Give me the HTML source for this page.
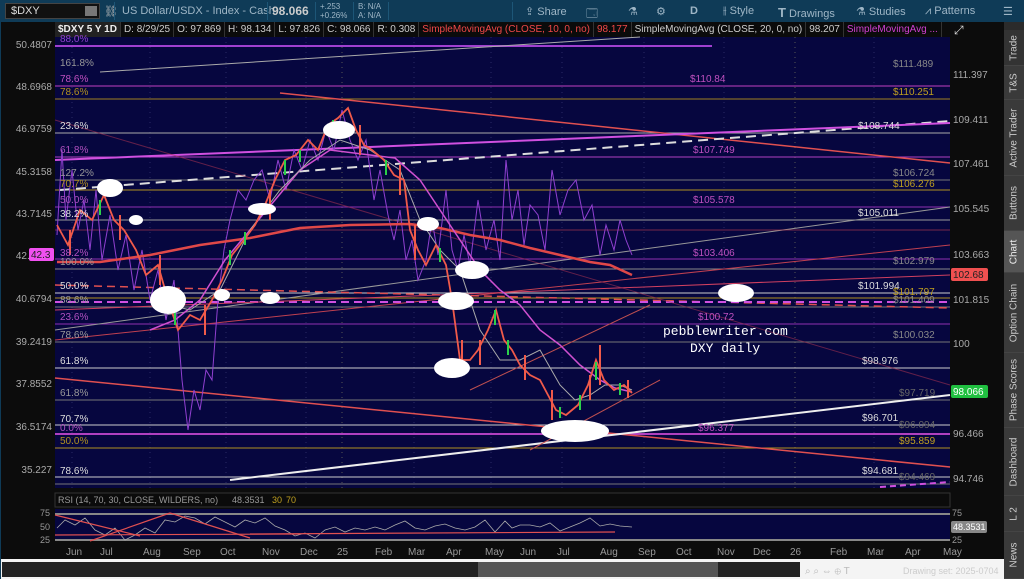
<!DOCTYPE html>
<html><head><meta charset="utf-8"><style>
*{margin:0;padding:0;box-sizing:border-box}
body{width:1024px;height:579px;overflow:hidden;background:#0c0c0c;font-family:"Liberation Sans",sans-serif;position:relative}
.tb{position:absolute;left:0;top:0;width:1024px;height:22px;background:#0f3b57;color:#9fb6c6;font-size:11px}
.tb span{position:absolute;top:5px;white-space:nowrap}
.sep{position:absolute;top:2px;width:1px;height:18px;background:#1d5677}
.ir{position:absolute;left:55px;top:22px;height:15px;background:#0b0b0b;font-size:10px;color:#ccc;white-space:nowrap}
.ir span{display:inline-block;padding:0 3px;border-right:1px solid #333;line-height:15px}
.side{position:absolute;left:1004px;top:22px;width:20px;height:557px;background:#2b2b2b}
.tab{position:absolute;left:0;width:20px;border-bottom:1px solid #444;background:#3a3a3a;color:#ccc;font-size:10px}
.tab div{position:absolute;left:50%;top:50%;transform:translate(-50%,-50%) rotate(-90deg);white-space:nowrap}
</style></head><body>
<div class="tb">
<div style="position:absolute;left:5px;top:3px;width:95px;height:16px;background:#111;border:1px solid #444;color:#ddd;font-size:11px;padding:1px 5px">$DXY<div style="position:absolute;right:2px;top:2px;width:12px;height:10px;background:#777"></div></div>
<span style="left:104px;color:#bbb">⛓</span>
<div class="sep" style="left:114px"></div>
<span style="left:122px;font-size:11px;top:5px">US Dollar/USDX - Index - Cash</span>
<div class="sep" style="left:267px"></div>
<span style="left:272px;font-size:12px;top:4px;font-weight:bold;color:#ccc">98.066</span>
<div class="sep" style="left:315px"></div>
<span style="left:320px;font-size:8px;top:2px;line-height:9px">+.253<br>+0.26%</span>
<div class="sep" style="left:353px"></div>
<span style="left:358px;font-size:8px;top:2px;line-height:9px">B: N/A<br>A: N/A</span>
<div class="sep" style="left:388px"></div>
<div class="sep" style="left:512px"></div>
<span style="left:525px">⇪ Share</span>
<span style="left:586px">🗔</span><span style="left:628px">⚗</span><span style="left:656px">⚙</span><span style="left:690px;font-weight:bold">D</span>
<span style="left:723px">⫲ Style</span><span style="left:778px"><b style="font-size:13px">T</b> Drawings</span>
<span style="left:856px">⚗ Studies</span><span style="left:925px">⩘ Patterns</span><span style="left:1003px">☰</span>
</div>
<div class="ir"><span style="font-weight:bold;color:#eee;background:#222">$DXY 5 Y 1D</span><span>D: 8/29/25</span><span>O: 97.869</span><span>H: 98.134</span><span>L: 97.826</span><span>C: 98.066</span><span>R: 0.308</span><span style="color:#f04848">SimpleMovingAvg (CLOSE, 10, 0, no)</span><span style="color:#f04848">98.177</span><span>SimpleMovingAvg (CLOSE, 20, 0, no)</span><span>98.207</span><span style="color:#d040d0">SimpleMovingAvg ...</span></div>
<svg style="position:absolute;left:0;top:0" width="1004" height="579" font-family="Liberation Sans" font-size="10">
<rect x="55" y="37" width="895" height="451" fill="#06063f"/>
<g stroke="#2a2a66" stroke-dasharray="1,4"><line x1="72" y1="37" x2="72" y2="488"/><line x1="150" y1="37" x2="150" y2="488"/><line x1="226" y1="37" x2="226" y2="488"/><line x1="306" y1="37" x2="306" y2="488"/><line x1="342" y1="37" x2="342" y2="488" stroke="#555"/><line x1="414" y1="37" x2="414" y2="488"/><line x1="491" y1="37" x2="491" y2="488"/><line x1="562" y1="37" x2="562" y2="488"/><line x1="644" y1="37" x2="644" y2="488"/><line x1="724" y1="37" x2="724" y2="488"/><line x1="795" y1="37" x2="795" y2="488" stroke="#555"/><line x1="874" y1="37" x2="874" y2="488"/></g>
<g stroke-width="1">
<line x1="55" y1="46" x2="712" y2="46" stroke="#a040d0" stroke-width="2"/>
<line x1="55" y1="86" x2="950" y2="86" stroke="#c040c0"/>
<line x1="55" y1="99" x2="950" y2="99" stroke="#a08020"/>
<line x1="55" y1="133" x2="950" y2="133" stroke="#aaa"/>
<line x1="55" y1="157" x2="950" y2="157" stroke="#b040c0"/>
<line x1="55" y1="180" x2="950" y2="180" stroke="#777"/>
<line x1="55" y1="190" x2="950" y2="190" stroke="#b09020"/>
<line x1="55" y1="207" x2="950" y2="207" stroke="#9030b0"/>
<line x1="55" y1="220" x2="950" y2="220" stroke="#999"/>
<line x1="55" y1="259" x2="950" y2="259" stroke="#9030b0"/>
<line x1="55" y1="269" x2="950" y2="269" stroke="#888"/>
<line x1="55" y1="293" x2="950" y2="293" stroke="#ccc"/>
<line x1="55" y1="298" x2="950" y2="298" stroke="#b09020"/>
<line x1="55" y1="307" x2="950" y2="307" stroke="#777"/>
<line x1="55" y1="324" x2="950" y2="324" stroke="#9030b0"/>
<line x1="55" y1="342" x2="950" y2="342" stroke="#777"/>
<line x1="55" y1="368" x2="950" y2="368" stroke="#ccc"/>
<line x1="55" y1="400" x2="950" y2="400" stroke="#777"/>
<line x1="55" y1="425" x2="950" y2="425" stroke="#ccc"/>
<line x1="55" y1="434" x2="950" y2="434" stroke="#b040c0" stroke-width="2"/>
<line x1="55" y1="448" x2="950" y2="448" stroke="#b09020"/>
<line x1="55" y1="477" x2="950" y2="477" stroke="#ccc"/>
<line x1="55" y1="484" x2="950" y2="484" stroke="#777"/>
</g>
<g fill="none">
<line x1="100" y1="72" x2="640" y2="37" stroke="#aaa"/>
<line x1="280" y1="93" x2="950" y2="163" stroke="#e05050" stroke-width="1.5"/>
<line x1="60" y1="190" x2="950" y2="121" stroke="#ddd" stroke-width="2" stroke-dasharray="10,6"/>
<line x1="55" y1="160" x2="950" y2="123" stroke="#d050e0" stroke-width="2"/>
<line x1="55" y1="330" x2="950" y2="207" stroke="#999"/>
<line x1="55" y1="340" x2="950" y2="245" stroke="#c04050"/>
<line x1="55" y1="230" x2="950" y2="230" stroke="#c04050" opacity=".6"/>
<line x1="55" y1="285" x2="950" y2="308" stroke="#e05050" stroke-width="1.5" stroke-dasharray="8,5"/>
<line x1="55" y1="302" x2="950" y2="302" stroke="#d050e0" stroke-width="2" stroke-dasharray="8,5"/>
<line x1="55" y1="310" x2="950" y2="275" stroke="#d04060"/>
<line x1="55" y1="378" x2="950" y2="467" stroke="#e05050" stroke-width="1.5"/>
<line x1="230" y1="480" x2="950" y2="395" stroke="#eee" stroke-width="2"/>
<line x1="55" y1="120" x2="950" y2="385" stroke="#a03050" opacity=".6"/>
<line x1="530" y1="450" x2="660" y2="380" stroke="#c05050"/>
<line x1="470" y1="390" x2="650" y2="305" stroke="#c05050"/>
<line x1="880" y1="487" x2="950" y2="482" stroke="#d050e0" stroke-width="2" stroke-dasharray="6,4"/>
</g>
<polyline fill="none" stroke="#9040d0" stroke-width="1" points="57,235 62,150 66,220 72,170 78,230 84,200 90,250 96,190 102,260 110,215 118,270 126,235 134,290 142,250 150,300 158,270 166,320 174,280 182,380 188,430 194,390 200,410 206,370 212,380 218,300 224,250 230,220 238,190 246,200 254,180 262,170 270,200 278,160 286,190 294,150 302,170 310,140 318,160 326,130 334,150 342,110 350,140 358,160 366,140 374,200 380,170 388,215 394,240 400,210 406,260 412,240 418,280 426,260 432,220 438,255 446,190 452,250 458,270 464,235 470,265 478,200 486,250 494,220 500,260 506,160 512,220 518,190 524,245 530,205 538,215 545,250 552,170 560,215 568,190 576,180 584,220 592,205 600,255 606,225 614,250 620,220 626,240 632,255"/>
<polyline fill="none" stroke="#e04848" stroke-width="2.5" points="57,262 100,262 150,255 200,245 250,238 300,228 350,225 410,224 440,228 470,235 500,240 530,248 560,255 590,262 610,265 632,275"/>
<polyline fill="none" stroke="#d050d0" stroke-width="1.5" points="150,330 175,320 200,300 225,260 250,230 275,200 300,170 330,150 370,155 395,158 420,180 440,210 460,240 480,270 500,290 520,305 540,330 560,345 580,365 600,380 615,388 632,392"/>
<polyline fill="none" stroke="#aaa" stroke-width="1" points="150,300 190,310 220,290 250,230 280,190 310,160 340,140 370,150 400,170 420,220 440,250 460,270 470,300 480,330 500,360 520,360 540,350 560,385 575,400 590,395 605,385 620,385 632,390"/>
<polyline fill="none" stroke="#f05a4a" stroke-width="1.8" points="57,225 68,245 80,210 92,220 104,195 114,220 124,230 136,250 146,275 158,265 168,300 178,330 190,315 200,320 212,300 222,280 232,255 244,240 255,225 265,205 275,180 285,160 296,155 308,140 318,150 328,125 338,118 348,108 356,130 364,145 372,150 384,160 394,175 404,180 410,230 418,250 426,265 436,245 446,265 452,300 460,360 470,360 478,350 488,330 496,310 504,340 512,350 520,365 530,375 540,380 548,395 556,410 566,415 578,405 588,385 596,360 604,380 614,390 624,385 632,393"/>
<g stroke="#f05a4a" stroke-width="2"><line x1="70" y1="230" x2="70" y2="255"/><line x1="120" y1="215" x2="120" y2="240"/><line x1="160" y1="255" x2="160" y2="285"/><line x1="205" y1="305" x2="205" y2="335"/><line x1="270" y1="190" x2="270" y2="220"/><line x1="360" y1="125" x2="360" y2="155"/><line x1="400" y1="165" x2="400" y2="195"/><line x1="415" y1="225" x2="415" y2="260"/><line x1="462" y1="340" x2="462" y2="375"/><line x1="480" y1="340" x2="480" y2="365"/><line x1="525" y1="355" x2="525" y2="380"/><line x1="552" y1="390" x2="552" y2="420"/><line x1="590" y1="375" x2="590" y2="400"/><line x1="600" y1="345" x2="600" y2="385"/><line x1="628" y1="380" x2="628" y2="398"/></g>
<g stroke="#2bd04a" stroke-width="2"><line x1="100" y1="200" x2="100" y2="215"/><line x1="175" y1="312" x2="175" y2="325"/><line x1="245" y1="232" x2="245" y2="245"/><line x1="285" y1="160" x2="285" y2="175"/><line x1="333" y1="120" x2="333" y2="135"/><line x1="386" y1="160" x2="386" y2="175"/><line x1="440" y1="248" x2="440" y2="262"/><line x1="508" y1="340" x2="508" y2="355"/><line x1="560" y1="407" x2="560" y2="418"/><line x1="596" y1="362" x2="596" y2="380"/><line x1="620" y1="383" x2="620" y2="395"/><line x1="230" y1="250" x2="230" y2="265"/><line x1="300" y1="150" x2="300" y2="162"/><line x1="495" y1="310" x2="495" y2="325"/><line x1="580" y1="395" x2="580" y2="410"/></g>
<g fill="#fff"><ellipse cx="110" cy="188" rx="13" ry="9"/><ellipse cx="136" cy="220" rx="7" ry="5"/><ellipse cx="262" cy="209" rx="14" ry="6"/><ellipse cx="168" cy="300" rx="18" ry="14"/><ellipse cx="222" cy="295" rx="8" ry="6"/><ellipse cx="270" cy="298" rx="10" ry="6"/><ellipse cx="339" cy="130" rx="16" ry="9"/><ellipse cx="428" cy="224" rx="11" ry="7"/><ellipse cx="472" cy="270" rx="17" ry="9"/><ellipse cx="456" cy="301" rx="18" ry="9"/><ellipse cx="452" cy="368" rx="18" ry="10"/><ellipse cx="575" cy="431" rx="34" ry="11"/><ellipse cx="736" cy="293" rx="18" ry="9"/></g>
<g font-size="10" fill="#999"><text x="60" y="42" fill="#9040d0">88.0%</text><text x="60" y="66">161.8%</text><text x="60" y="82" fill="#c050c0">78.6%</text><text x="60" y="95" fill="#b09020">78.6%</text><text x="60" y="129" fill="#ddd">23.6%</text><text x="60" y="153" fill="#b050c0">61.8%</text><text x="60" y="176">127.2%</text><text x="60" y="187" fill="#b09020">70.7%</text><text x="60" y="203" fill="#b050c0">50.0%</text><text x="60" y="217" fill="#ddd">38.2%</text><text x="60" y="256" fill="#b050c0">38.2%</text><text x="60" y="265">100.0%</text><text x="60" y="289" fill="#ddd">50.0%</text><text x="60" y="303">88.6%</text><text x="60" y="320" fill="#b050c0">23.6%</text><text x="60" y="338">78.6%</text><text x="60" y="364" fill="#ddd">61.8%</text><text x="60" y="396">61.8%</text><text x="60" y="422" fill="#ddd">70.7%</text><text x="60" y="431" fill="#b050c0">0.0%</text><text x="60" y="444" fill="#b09020">50.0%</text><text x="60" y="474" fill="#ddd">78.6%</text></g>
<g font-size="10"><text x="690" y="82" fill="#c050c0">$110.84</text><text x="858" y="129" fill="#ddd">$108.744</text><text x="693" y="153" fill="#c050c0">$107.749</text><text x="693" y="203" fill="#c050c0">$105.578</text><text x="858" y="216" fill="#ddd">$105.011</text><text x="693" y="256" fill="#c050c0">$103.406</text><text x="858" y="289" fill="#ddd">$101.994</text><text x="698" y="320" fill="#c050c0">$100.72</text><text x="862" y="364" fill="#ddd">$98.976</text><text x="862" y="421" fill="#ddd">$96.701</text><text x="698" y="431" fill="#c050c0">$96.377</text><text x="862" y="474" fill="#ddd">$94.681</text>
<text x="893" y="67" fill="#888">$111.489</text><text x="893" y="95" fill="#c0a020">$110.251</text><text x="893" y="176" fill="#888">$106.724</text><text x="893" y="187" fill="#c0a020">$106.276</text><text x="893" y="264" fill="#888">$102.979</text><text x="893" y="295" fill="#c0a020">$101.797</text><text x="893" y="303" fill="#888">$101.409</text><text x="893" y="338" fill="#888">$100.032</text><text x="899" y="396" fill="#666">$97.719</text><text x="899" y="428" fill="#666">$96.094</text><text x="899" y="444" fill="#c0a020">$95.859</text><text x="899" y="480" fill="#666">$94.469</text></g>
<text x="663" y="335" fill="#fff" font-family="Liberation Mono" font-size="13">pebblewriter.com</text>
<text x="690" y="352" fill="#fff" font-family="Liberation Mono" font-size="13">DXY daily</text>
<g font-size="10" fill="#aaa" text-anchor="end"><text x="52" y="48">50.4807</text><text x="52" y="90">48.6968</text><text x="52" y="132">46.9759</text><text x="52" y="175">45.3158</text><text x="52" y="217">43.7145</text><text x="52" y="259">42.7897</text><text x="52" y="302">40.6794</text><text x="52" y="345">39.2419</text><text x="52" y="387">37.8552</text><text x="52" y="430">36.5174</text><text x="52" y="473">35.227</text></g>
<rect x="29" y="248" width="25" height="13" fill="#f050f0" rx="2"/><text x="31" y="258" font-size="10" fill="#222">42.3</text>
<g font-size="10" fill="#aaa"><text x="953" y="78">111.397</text><text x="953" y="123">109.411</text><text x="953" y="167">107.461</text><text x="953" y="212">105.545</text><text x="953" y="258">103.663</text><text x="953" y="303">101.815</text><text x="953" y="347">100</text><text x="953" y="437">96.466</text><text x="953" y="482">94.746</text></g>
<rect x="951" y="268" width="37" height="13" fill="#f05050" rx="2"/><text x="953" y="278" font-size="10" fill="#222">102.68</text>
<rect x="951" y="385" width="37" height="13" fill="#20c040" rx="2"/><text x="953" y="395" font-size="10" fill="#fff">98.066</text>
<text x="954" y="34" fill="#ddd" font-size="12">⤢</text>
<rect x="55" y="493" width="895" height="14" fill="#0b0b0b" stroke="#333"/>
<text x="58" y="503" font-size="9" fill="#999">RSI (14, 70, 30, CLOSE, WILDERS, no)</text><text x="232" y="503" font-size="9" fill="#999">48.3531</text><text x="272" y="503" font-size="9" fill="#c0a020">30</text><text x="286" y="503" font-size="9" fill="#c0a020">70</text>
<rect x="55" y="509" width="895" height="32" fill="#06063f"/>
<line x1="55" y1="514" x2="950" y2="514" stroke="#888" stroke-width="2"/><line x1="55" y1="540" x2="950" y2="540" stroke="#888" stroke-width="2"/>
<g font-size="9" fill="#999"><text x="40" y="516">75</text><text x="40" y="530">50</text><text x="40" y="543">25</text><text x="952" y="516">75</text><text x="952" y="543">25</text></g>
<rect x="951" y="521" width="36" height="12" fill="#888" rx="2"/><text x="953" y="530" font-size="9" fill="#fff">48.3531</text>
<polyline fill="none" stroke="#aaa" stroke-width=".8" points="57,528 65,520 75,525 85,518 95,530 105,535 115,528 125,540 135,535 145,528 155,533 165,520 175,522 185,516 195,518 205,524 215,517 225,522 235,527 245,520 255,523 265,518 275,526 285,530 295,536 305,533 315,538 325,530 335,527 345,532 355,528 365,530 375,527 385,530 395,525 405,521 415,528 425,530 435,526 445,524 455,528 465,530 475,527 485,520 495,532 505,521 512,528 520,525 530,525 540,527 550,523 560,531 570,527 580,523 590,518 600,526 610,524 620,526 632,527"/>
<g stroke="#e05050" stroke-width="1.2"><line x1="55" y1="515" x2="140" y2="536"/><line x1="55" y1="535" x2="300" y2="534"/><line x1="90" y1="541" x2="170" y2="513"/><line x1="170" y1="513" x2="250" y2="538"/><line x1="250" y1="534" x2="615" y2="532"/></g>
<g font-size="10" fill="#999"><text x="66" y="555">Jun</text><text x="100" y="555">Jul</text><text x="143" y="555">Aug</text><text x="183" y="555">Sep</text><text x="220" y="555">Oct</text><text x="262" y="555">Nov</text><text x="300" y="555">Dec</text><text x="337" y="555">25</text><text x="375" y="555">Feb</text><text x="408" y="555">Mar</text><text x="446" y="555">Apr</text><text x="485" y="555">May</text><text x="520" y="555">Jun</text><text x="557" y="555">Jul</text><text x="600" y="555">Aug</text><text x="638" y="555">Sep</text><text x="676" y="555">Oct</text><text x="717" y="555">Nov</text><text x="753" y="555">Dec</text><text x="790" y="555">26</text><text x="830" y="555">Feb</text><text x="867" y="555">Mar</text><text x="905" y="555">Apr</text><text x="943" y="555">May</text></g>
<rect x="0" y="559" width="1004" height="20" fill="#f4f4f4"/>
<rect x="2" y="562" width="798" height="15" fill="#222"/><rect x="478" y="562" width="240" height="15" fill="#555"/>
<text x="805" y="574" font-size="10" fill="#bbb">⌕ ⌕ ⇔ ⊕ T</text><text x="903" y="574" font-size="9" fill="#ccc">Drawing set: 2025-0704</text>
<rect x="0" y="22" width="1" height="557" fill="#0f3b57"/>
</svg>
<div class="side">
<div class="tab" style="top:8px;height:36px;background:#333"><div>Trade</div></div>
<div class="tab" style="top:44px;height:34px"><div>T&amp;S</div></div>
<div class="tab" style="top:78px;height:76px"><div>Active Trader</div></div>
<div class="tab" style="top:154px;height:55px"><div>Buttons</div></div>
<div class="tab" style="top:209px;height:42px;background:#555;color:#eee"><div>Chart</div></div>
<div class="tab" style="top:251px;height:80px"><div>Option Chain</div></div>
<div class="tab" style="top:331px;height:75px"><div>Phase Scores</div></div>
<div class="tab" style="top:406px;height:68px"><div>Dashboard</div></div>
<div class="tab" style="top:474px;height:36px"><div>L 2</div></div>
<div class="tab" style="top:510px;height:47px"><div>News</div></div>
</div>
</body></html>
